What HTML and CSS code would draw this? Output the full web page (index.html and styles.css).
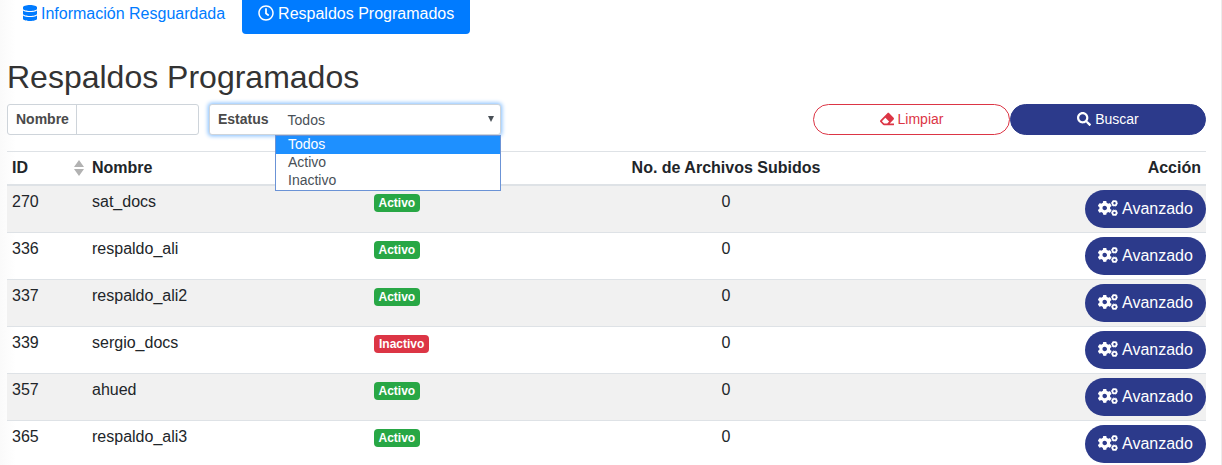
FILE: index.html
```html
<!DOCTYPE html>
<html lang="es">
<head>
<meta charset="utf-8">
<title>Respaldos Programados</title>
<link rel="stylesheet" href="styles.css">
</head>
<body>
<svg class="defs" aria-hidden="true">
  <symbol id="cogs" viewBox="0 0 640 512">
    <path d="M386.3 286.1l33.7 16.8c10.1 5.8 14.5 18.1 10.5 29.1-8.9 24.2-26.4 46.4-42.6 65.8-7.4 8.9-20.2 11.1-30.3 5.3l-29.1-16.8c-16 13.7-34.6 24.6-54.9 31.7v33.6c0 11.6-8.3 21.6-19.7 23.6-24.6 4.2-50.4 4.4-75.9 0-11.5-2-20-11.9-20-23.6V418c-20.3-7.2-38.9-18-54.9-31.7L74 403c-10 5.8-22.9 3.6-30.3-5.3-16.2-19.4-33.3-41.6-42.2-65.7-4-10.9.4-23.2 10.5-29.1l33.3-16.8c-3.9-20.9-3.9-42.4 0-63.4L12 205.8c-10.1-5.8-14.6-18.1-10.5-29 8.9-24.2 26-46.4 42.2-65.8 7.4-8.9 20.2-11.1 30.3-5.3l29.1 16.8c16-13.7 34.6-24.6 54.9-31.7V57.1c0-11.5 8.2-21.5 19.6-23.5 24.6-4.2 50.5-4.4 76-.1 11.5 2 20 11.9 20 23.6v33.6c20.3 7.2 38.9 18 54.9 31.7l29.1-16.8c10-5.8 22.9-3.6 30.3 5.3 16.2 19.4 33.2 41.6 42.1 65.8 4 10.9.1 23.2-10 29.1l-33.7 16.8c3.9 21 3.9 42.5 0 63.5zm-117.6 21.1c59.2-77-28.7-164.9-105.7-105.7-59.2 77 28.7 164.9 105.7 105.7z"/>
    <g fill="none" stroke="currentColor">
      <circle cx="528" cy="102" r="66" stroke-width="56"/>
      <circle cx="528" cy="102" r="98" stroke-width="20" pathLength="12" stroke-dasharray="1.2 .8" stroke-dashoffset=".6"/>
      <circle cx="528" cy="410" r="66" stroke-width="56"/>
      <circle cx="528" cy="410" r="98" stroke-width="20" pathLength="12" stroke-dasharray="1.2 .8" stroke-dashoffset=".6"/>
    </g>
  </symbol>
</svg>
<main class="panel">
  <nav class="tabs">
    <a class="tab"><svg class="icon icon-db" viewBox="0 0 448 512"><path d="M448 73.143v45.714C448 159.143 347.667 192 224 192S0 159.143 0 118.857V73.143C0 32.857 100.333 0 224 0s224 32.857 224 73.143zM448 176v102.857C448 319.143 347.667 352 224 352S0 319.143 0 278.857V176c48.125 33.143 136.208 48.572 224 48.572S399.874 209.143 448 176zm0 160v102.857C448 479.143 347.667 512 224 512S0 479.143 0 438.857V336c48.125 33.143 136.208 48.572 224 48.572S399.874 369.143 448 336z"/></svg><span>Información Resguardada</span></a>
    <a class="tab tab-active"><svg class="icon" viewBox="0 0 512 512"><path d="M256 8C119 8 8 119 8 256s111 248 248 248 248-111 248-248S393 8 256 8zm0 448c-110.5 0-200-89.5-200-200S145.5 56 256 56s200 89.5 200 200-89.5 200-200 200zm61.8-104.4l-84.9-61.7c-3.1-2.3-4.9-5.9-4.9-9.7V116c0-6.6 5.4-12 12-12h32c6.6 0 12 5.4 12 12v141.7l66.8 48.6c5.4 3.9 6.5 11.4 2.6 16.8L334.6 349c-3.9 5.3-11.4 6.5-16.8 2.6z"/></svg><span>Respaldos Programados</span></a>
  </nav>
  <h2 class="title">Respaldos Programados</h2>
  <div class="filters">
    <div class="group group-name"><span class="label">Nombre</span><span class="input"></span></div>
    <div class="group group-status">
      <span class="label">Estatus</span>
      <span class="select">Todos</span>
      <svg class="caret" viewBox="0 0 6 6"><path d="M0 0h6L3 6z"/></svg>
      <div class="menu">
        <div class="option option-active">Todos</div>
        <div class="option">Activo</div>
        <div class="option">Inactivo</div>
      </div>
    </div>
    <div class="actions">
      <button class="pill pill-clear"><svg class="icon-sm" viewBox="0 0 512 512"><path d="M497.941 273.941c18.745-18.745 18.745-49.137 0-67.882l-160-160c-18.745-18.745-49.136-18.746-67.883 0l-256 256c-18.745 18.745-18.745 49.137 0 67.882l96 96A48.004 48.004 0 0 0 144 480h356c6.627 0 12-5.373 12-12v-40c0-6.627-5.373-12-12-12H355.883l142.058-142.059zm-302.627-62.627l137.373 137.373L265.373 416H150.628l-80-80 124.686-124.686z"/></svg><span>Limpiar</span></button>
      <button class="pill pill-search"><svg class="icon-sm" viewBox="0 0 512 512"><path d="M505 442.7L405.3 343c-4.5-4.5-10.6-7-17-7H372c27.6-35.3 44-79.7 44-128C416 93.1 322.9 0 208 0S0 93.1 0 208s93.1 208 208 208c48.3 0 92.7-16.4 128-44v16.3c0 6.4 2.5 12.5 7 17l99.7 99.7c9.4 9.4 24.6 9.4 33.9 0l28.3-28.3c9.4-9.4 9.4-24.6.1-34zM208 336c-70.7 0-128-57.2-128-128 0-70.7 57.2-128 128-128 70.7 0 128 57.2 128 128 0 70.7-57.2 128-128 128z"/></svg><span>Buscar</span></button>
    </div>
  </div>
  <table class="table">
    <colgroup><col class="c-id"><col class="c-name"><col class="c-status"><col class="c-files"><col class="c-action"></colgroup>
    <thead>
      <tr><th><div class="sortable">ID<svg class="sort" viewBox="0 0 10 16"><path d="M5 0l5 7H0zM0 9h10l-5 7z"/></svg></div></th><th>Nombre</th><th></th><th class="center">No. de Archivos Subidos</th><th class="right">Acción</th></tr>
    </thead>
    <tbody>
      <tr><td>270</td><td>sat_docs</td><td><span class="badge">Activo</span></td><td class="center">0</td><td class="act"><button class="btn"><svg class="cogs"><use href="#cogs"/></svg><span>Avanzado</span></button></td></tr>
      <tr><td>336</td><td>respaldo_ali</td><td><span class="badge">Activo</span></td><td class="center">0</td><td class="act"><button class="btn"><svg class="cogs"><use href="#cogs"/></svg><span>Avanzado</span></button></td></tr>
      <tr><td>337</td><td>respaldo_ali2</td><td><span class="badge">Activo</span></td><td class="center">0</td><td class="act"><button class="btn"><svg class="cogs"><use href="#cogs"/></svg><span>Avanzado</span></button></td></tr>
      <tr><td>339</td><td>sergio_docs</td><td><span class="badge badge-off">Inactivo</span></td><td class="center">0</td><td class="act"><button class="btn"><svg class="cogs"><use href="#cogs"/></svg><span>Avanzado</span></button></td></tr>
      <tr><td>357</td><td>ahued</td><td><span class="badge">Activo</span></td><td class="center">0</td><td class="act"><button class="btn"><svg class="cogs"><use href="#cogs"/></svg><span>Avanzado</span></button></td></tr>
      <tr><td>365</td><td>respaldo_ali3</td><td><span class="badge">Activo</span></td><td class="center">0</td><td class="act"><button class="btn"><svg class="cogs"><use href="#cogs"/></svg><span>Avanzado</span></button></td></tr>
    </tbody>
  </table>
</main>
</body>
</html>
```
FILE: styles.css
```css
* { box-sizing: border-box; }
body {
  margin: 0;
  height: 465px;
  overflow: hidden;
  font: 16px/24px "Liberation Sans", Arial, sans-serif;
  color: #212529;
  background: #fff;
}
button { font-family: inherit; margin: 0; }
svg { fill: currentColor; flex: none; }
.defs { position: absolute; width: 0; height: 0; }
.panel {
  height: 465px;
  padding: 0 15px 0 7px;
  border-right: 1px solid #ececec;
  background: linear-gradient(to right, #fafafa, #fff 16px);
}

.tabs { display: flex; height: 34px; }
.tab {
  display: flex;
  align-items: center;
  gap: 4px;
  height: 34px;
  padding: 0 16px 7px;
  color: #007bff;
}
.tab:first-child { padding-right: 17px; }
.tab-active {
  color: #fff;
  background: #007bff;
  border-radius: 0 0 4px 4px;
}
.icon { width: 16px; height: 16px; margin-bottom: 1px; }
.icon-db { width: 14px; }

.title {
  margin: 24px 0 8px;
  font-size: 32px;
  font-weight: 400;
  line-height: 38px;
  color: #333;
}

.filters { display: flex; height: 31px; font-size: 14px; line-height: 21px; }
.group {
  display: flex;
  align-items: center;
  height: 31px;
  border: 1px solid #ced4da;
  border-radius: 3px;
  background: #fff;
  color: #495057;
}
.group-name { width: 192px; margin-right: 10px; }
.label { padding: 0 7px 0 8px; font-weight: 700; color: #4a4a4a; }
.input { flex: 1; align-self: stretch; border-left: 1px solid #ced4da; }
.group-status {
  position: relative;
  width: 292px;
  box-shadow: 0 0 4px 1px #80bdff;
}
.select { flex: 1; padding: 2px 0 0 12px; }
.caret { width: 6px; height: 6px; margin: 0 6px 2px 0; }
.menu {
  position: absolute;
  top: 30px;
  left: 65px;
  width: 226px;
  border: 1px solid #6b93d6;
  background: #fff;
}
.option { height: 18px; padding-left: 12px; line-height: 16px; }
.option-active { color: #fff; background: #1e90ff; }

.actions { display: flex; margin-left: auto; }
.pill {
  display: flex;
  align-items: center;
  justify-content: center;
  gap: 4px;
  height: 31px;
  border: 1px solid;
  border-radius: 16px;
  padding: 0 0 2px;
  font-size: 14px;
}
.pill-clear { width: 197px; color: #dc3545; background: #fff; }
.pill-search { width: 196px; color: #fff; background: #2c3a8b; border-color: #2c3a8b; }
.icon-sm { width: 14px; height: 14px; }

.table {
  width: 1199px;
  margin-top: 16px;
  table-layout: fixed;
  border-collapse: separate;
  border-spacing: 0;
}
.c-id { width: 80px; }
.c-name { width: 282px; }
.c-status { width: 131px; }
.c-files { width: 452px; }
.c-action { width: 254px; }
th {
  height: 35px;
  padding: 4px 5px;
  border-top: 1px solid #dee2e6;
  border-bottom: 2px solid #dee2e6;
  text-align: left;
  vertical-align: top;
}
td {
  height: 47px;
  padding: 4px 5px;
  border-top: 1px solid #dee2e6;
  vertical-align: top;
}
tbody tr:first-child td { height: 46px; border-top: 0; }
tbody tr:nth-child(odd) { background: #f1f1f1; }
.center { text-align: center; }
.right { text-align: right; }
.sortable { display: flex; align-items: center; justify-content: space-between; margin-right: -2px; }
.sort { width: 10px; height: 16px; fill: #b2b2b2; }
.badge {
  display: inline-block;
  padding: 3px 4.5px;
  border-radius: 4px;
  background: #28a745;
  color: #fff;
  font-size: 12px;
  font-weight: 700;
  line-height: 12px;
}
.badge-off { padding: 3px 5px; background: #dc3545; }
.act { padding-right: 0; }
.btn {
  display: flex;
  align-items: center;
  gap: 4px;
  width: 121px;
  height: 38px;
  margin-left: auto;
  padding: 0 0 0 13px;
  border: 0;
  border-radius: 19px;
  background: #2c3a8b;
  color: #fff;
  font-size: 16px;
}
.cogs { width: 20px; height: 16px; margin-bottom: 2px; }
```
